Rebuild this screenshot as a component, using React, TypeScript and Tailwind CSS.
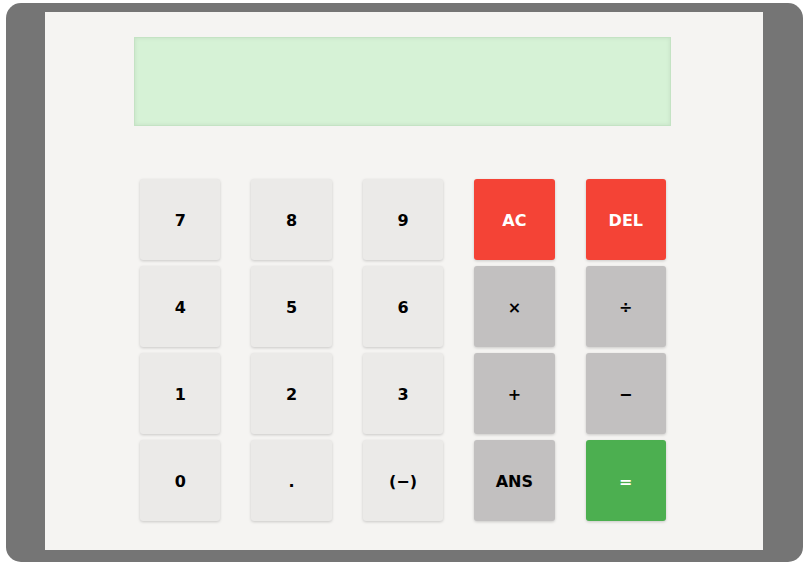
const keys = [
  { label: "7", tone: "num" },
  { label: "8", tone: "num" },
  { label: "9", tone: "num" },
  { label: "AC", tone: "red" },
  { label: "DEL", tone: "red" },
  { label: "4", tone: "num" },
  { label: "5", tone: "num" },
  { label: "6", tone: "num" },
  { label: "×", tone: "op" },
  { label: "÷", tone: "op" },
  { label: "1", tone: "num" },
  { label: "2", tone: "num" },
  { label: "3", tone: "num" },
  { label: "+", tone: "op" },
  { label: "−", tone: "op" },
  { label: "0", tone: "num" },
  { label: ".", tone: "num" },
  { label: "(−)", tone: "num" },
  { label: "ANS", tone: "op" },
  { label: "=", tone: "green" },
];

const toneClass: Record<string, string> = {
  num: "bg-[#ebeae8] text-black",
  op: "bg-[#c2c0c0] text-black",
  red: "bg-[#f44336] text-white",
  green: "bg-[#4caf50] text-white",
};

export default function App() {
  return (
    <div className="w-[810px] h-[565px] bg-white pt-[3px] pl-[6px] font-['DejaVu_Sans',sans-serif]">
      <div className="w-[797px] h-[559px] rounded-[15px] bg-[#757575] pt-[9px] pl-[39px]">
        <div className="w-[718px] h-[538px] bg-[#f5f4f2] flex flex-col items-start pt-[25px]">
          <div className="ml-[89px] w-[537px] h-[89px] bg-[#d6f2d6] border border-[#c4e3c4] shadow-[inset_0_0_4px_rgba(0,0,0,0.08)]" />
          <div className="ml-[95px] mt-[53px] w-[526px] grid grid-cols-5 gap-x-[31px] gap-y-[6px]">
            {keys.map((k) => (
              <button
                key={k.label}
                className={`h-[81px] pt-[2px] rounded-[3px] shadow-[0_1px_3px_rgba(0,0,0,0.18)] flex items-center justify-center text-[16px] font-bold ${toneClass[k.tone]}`}
              >
                {k.label}
              </button>
            ))}
          </div>
        </div>
      </div>
    </div>
  );
}
